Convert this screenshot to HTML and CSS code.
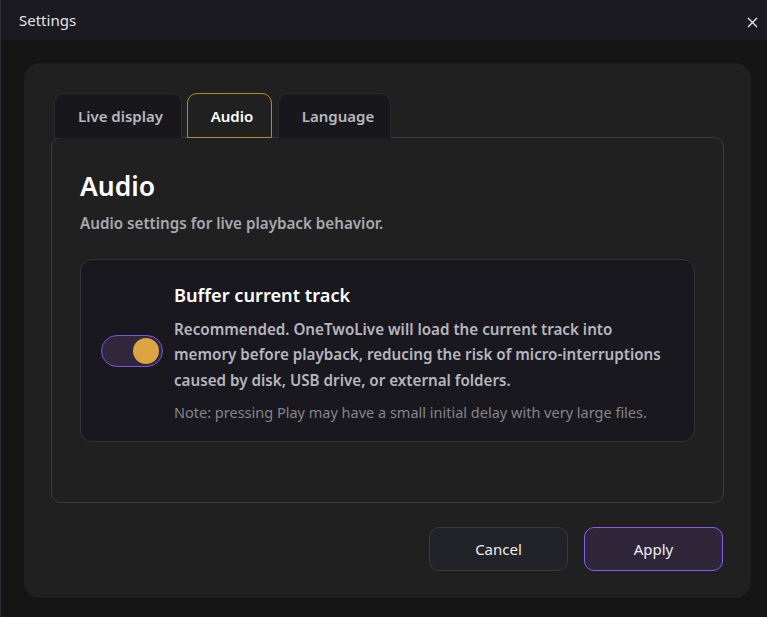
FILE: index.html
```html
<!DOCTYPE html>
<html lang="en">
  <head>
    <meta charset="UTF-8" />
    <title>Settings</title>
    <link rel="stylesheet" href="styles.css">
  </head>
  <body>
    <div class="window">
      <header class="titlebar">
        <span class="title">Settings</span>
        <button class="close" aria-label="Close">
          <svg width="11" height="11" viewBox="0 0 11 11">
            <path d="M1 1 L10 10 M10 1 L1 10" stroke="#e6e6ea" stroke-width="1.4" />
          </svg>
        </button>
      </header>

      <main class="content">
        <section class="card">
          <nav class="tabs">
            <button class="tab">Live display</button>
            <button class="tab active">Audio</button>
            <button class="tab">Language</button>
          </nav>

          <div class="panel">
            <h2>Audio</h2>
            <p class="subtitle">Audio settings for live playback behavior.</p>

            <div class="option">
              <label class="toggle on">
                <span class="knob"></span>
              </label>
              <div class="option-text">
                <h3>Buffer current track</h3>
                <p class="desc">
                  Recommended. OneTwoLive will load the current track into
                  memory before playback, reducing the risk of micro-interruptions
                  caused by disk, USB drive, or external folders.
                </p>
                <p class="note">Note: pressing Play may have a small initial delay with very large files.</p>
              </div>
            </div>
          </div>

          <div class="actions">
            <button class="btn">Cancel</button>
            <button class="btn primary">Apply</button>
          </div>
        </section>
      </main>
    </div>
  </body>
</html>
```

FILE: styles.css
```css
* {
  box-sizing: border-box;
}

html, body {
  margin: 0;
  height: 100%;
}

body {
  font-family: "Segoe UI", "Noto Sans", "Open Sans", sans-serif;
  background-color: #151515;
  color: #e8e8ec;
}

.window {
  height: 100%;
  display: flex;
  flex-direction: column;
  border-left: 1px solid #2c2c36;
}

.titlebar {
  height: 40px;
  flex: none;
  display: flex;
  align-items: center;
  justify-content: space-between;
  padding: 0 9px 0 18px;
  background-color: #1a1a20;
}

.title {
  font-size: 15px;
  color: #e4e4ea;
}

.close {
  background: none;
  border: none;
  padding: 0;
  width: 12px;
  height: 12px;
  display: flex;
  align-items: center;
  justify-content: center;
  margin-top: 4px;
}

.content {
  flex: 1;
  padding: 23px 16px 18px 23px;
}

.card {
  height: 535px;
  background-color: #202020;
  border-radius: 16px;
  padding: 30px 27px 27px 27px;
  display: flex;
  flex-direction: column;
}

.tabs {
  display: flex;
  gap: 5px;
  padding-left: 3px;
  height: 45px;
  position: relative;
  z-index: 1;
}

.tab {
  font-family: inherit;
  font-size: 15px;
  font-weight: 600;
  color: #b8b8c0;
  background-color: #18181c;
  border: 1px solid #2a2a32;
  border-bottom: none;
  border-radius: 10px 10px 0 0;
  padding: 0 0 0 5px;
  height: 45px;
  white-space: nowrap;
}

.tab:first-child {
  width: 128px;
}

.tab.active {
  background-color: #202020;
  color: #ffffff;
  border-color: #b8862d;
  border-bottom: 1px solid #b8862d;
  width: 85px;
}

.tab:last-child {
  width: 113px;
  margin-left: 1px;
  padding-left: 7px;
}

.panel {
  margin-top: -1px;
  height: 366px;
  border: 1px solid #393942;
  border-radius: 10px;
  padding: 33px 28px 0 28px;
}

h2 {
  margin: 0;
  font-size: 26.5px;
  font-weight: 600;
  color: #ffffff;
  line-height: 30px;
}

.subtitle {
  margin: 12px 0 0;
  font-size: 15.2px;
  font-weight: 600;
  color: #a8a8b0;
}

.option {
  margin-top: 26px;
  height: 183px;
  background-color: #19181e;
  border: 1px solid #34343d;
  border-radius: 12px;
  display: flex;
  align-items: center;
  padding: 0 30px 0 20px;
  gap: 11px;
}

.toggle {
  flex: none;
  width: 62px;
  height: 32px;
  border-radius: 16px;
  border: 1.5px solid #7d52dc;
  background-color: #31273d;
  display: flex;
  align-items: center;
  justify-content: flex-end;
  padding-right: 3px;
}

.knob {
  width: 26px;
  height: 26px;
  border-radius: 50%;
  background-color: #dba543;
}

.option-text {
  padding-top: 4px;
}

h3 {
  margin: 0;
  font-size: 18.2px;
  font-weight: 600;
  color: #ffffff;
  line-height: 24px;
}

.desc {
  margin: 10px 0 0;
  font-size: 15.2px;
  font-weight: 600;
  color: #b6b6be;
  line-height: 25.5px;
}

.note {
  margin: 9px 0 0;
  font-size: 14.5px;
  color: #85858c;
  line-height: 20px;
}

.actions {
  margin-top: auto;
  margin-right: 1px;
  display: flex;
  justify-content: flex-end;
  gap: 16px;
}

.btn {
  font-family: inherit;
  font-size: 15px;
  width: 139px;
  height: 44px;
  border-radius: 10px;
  border: 1px solid #393942;
  background-color: #222329;
  color: #eeeef2;
}

.btn.primary {
  border-color: #8a5cf0;
  background-color: #2f2639;
}
```
